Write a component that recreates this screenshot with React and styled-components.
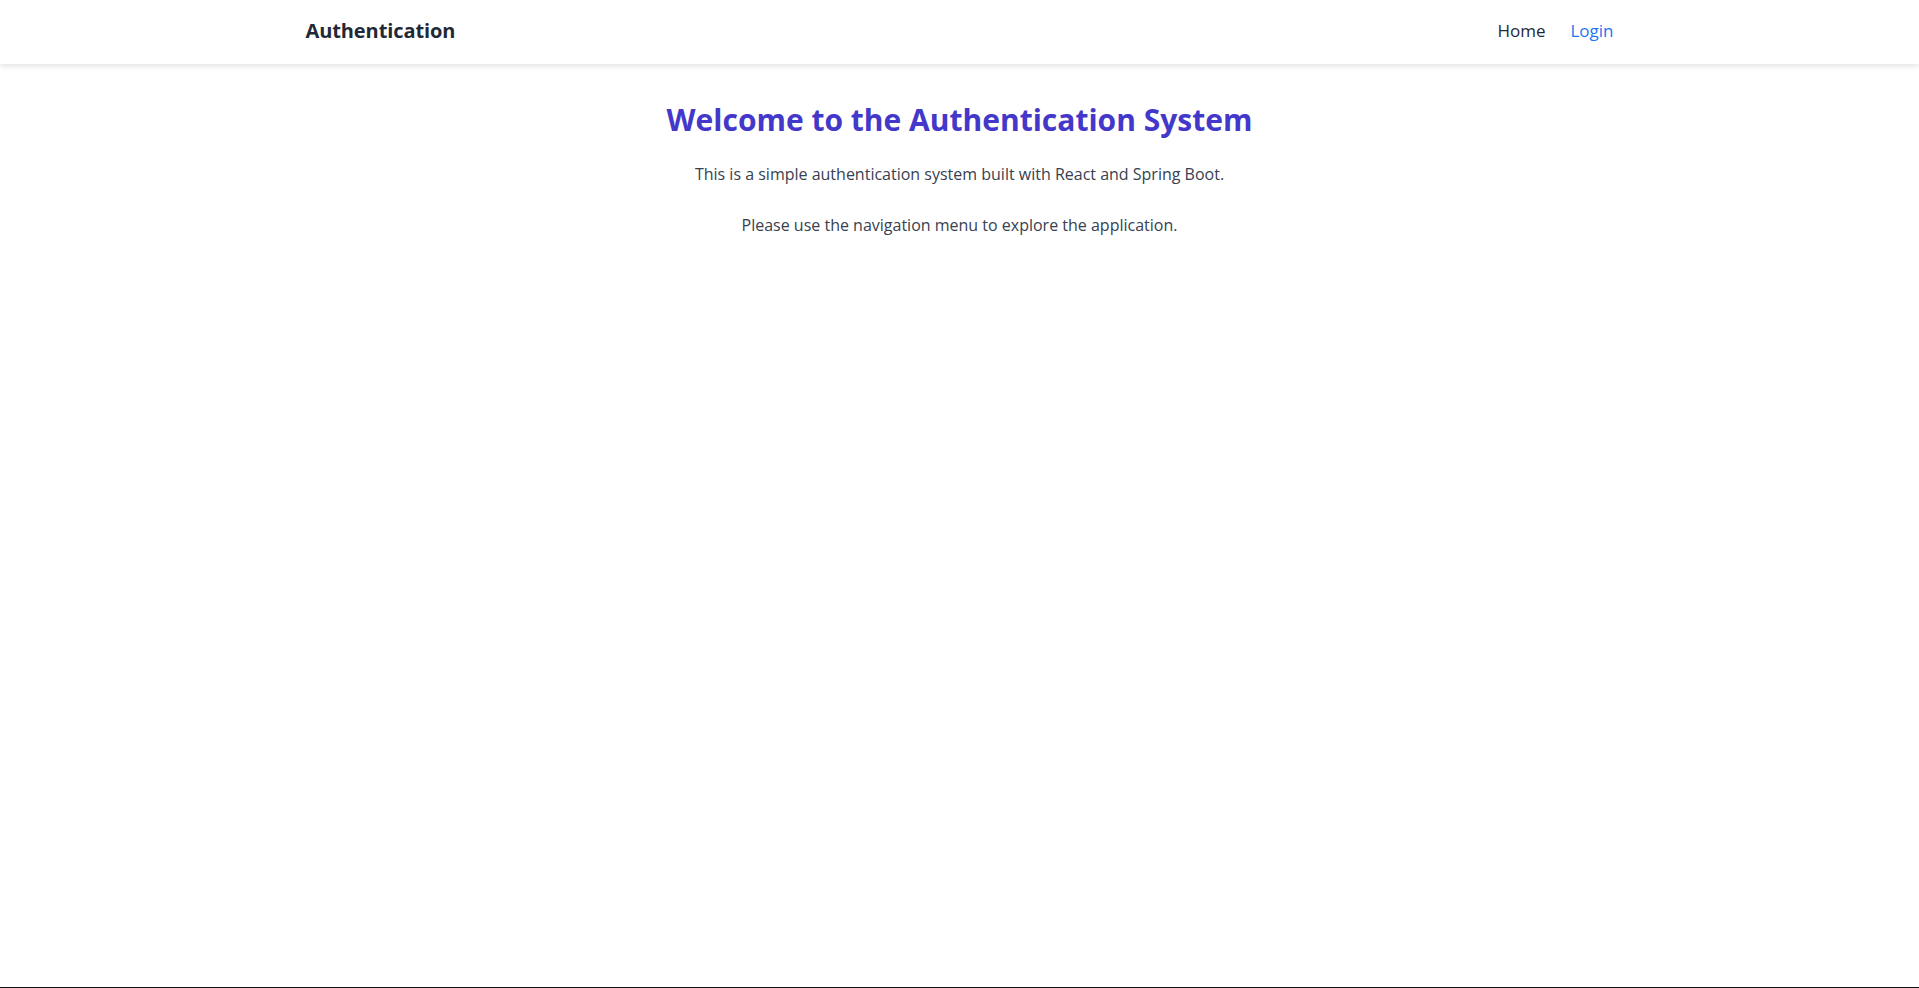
import React from "react";
import styled, { createGlobalStyle } from "styled-components";

const GlobalStyle = createGlobalStyle`
  html, body {
    margin: 0;
    padding: 0;
    background: #ffffff;
  }
  body {
    font-family: "Segoe UI", "Open Sans", sans-serif;
  }
  * {
    box-sizing: border-box;
  }
`;

const Page = styled("div")`
  min-height: 100vh;
  display: flex;
  flex-direction: column;
  border-bottom: 1px solid #111111;
`;

const NavBar = styled("nav")`
  height: 64px;
  background: #ffffff;
  box-shadow: 0 2px 6px rgba(0, 0, 0, 0.12);
`;

const NavInner = styled("div")`
  max-width: 1308px;
  height: 100%;
  margin: 0 auto;
  padding-bottom: 4px;
  display: flex;
  align-items: center;
  justify-content: space-between;
`;

const Brand = styled("a")`
  font-size: 20px;
  font-weight: 700;
  letter-spacing: -0.1px;
  color: #1f2937;
  text-decoration: none;
`;

const NavLinks = styled("div")`
  display: flex;
  align-items: center;
  gap: 25px;
`;

const NavLink = styled("a")`
  font-size: 17px;
  font-weight: 500;
  color: ${(p) => (p.active ? "#2176f0" : "#1f2937")};
  text-decoration: none;
  cursor: pointer;
`;

const Main = styled("main")`
  flex: 1;
  display: flex;
  flex-direction: column;
  align-items: center;
  padding-top: 34px;
  text-align: center;
`;

const Title = styled("h1")`
  margin: 0 0 20px;
  font-size: 30px;
  font-weight: 700;
  line-height: 44px;
  color: #4338ca;
`;

const Text = styled("p")`
  margin: 0 0 27px;
  font-size: 16px;
  line-height: 24px;
  color: #374151;
`;

function App() {
  return (
    <Page>
      <GlobalStyle />
      <NavBar>
        <NavInner>
          <Brand>Authentication</Brand>
          <NavLinks>
            <NavLink>Home</NavLink>
            <NavLink active>Login</NavLink>
          </NavLinks>
        </NavInner>
      </NavBar>
      <Main>
        <Title>Welcome to the Authentication System</Title>
        <Text>
          This is a simple authentication system built with React and Spring
          Boot.
        </Text>
        <Text>Please use the navigation menu to explore the application.</Text>
      </Main>
    </Page>
  );
}

export default App;
